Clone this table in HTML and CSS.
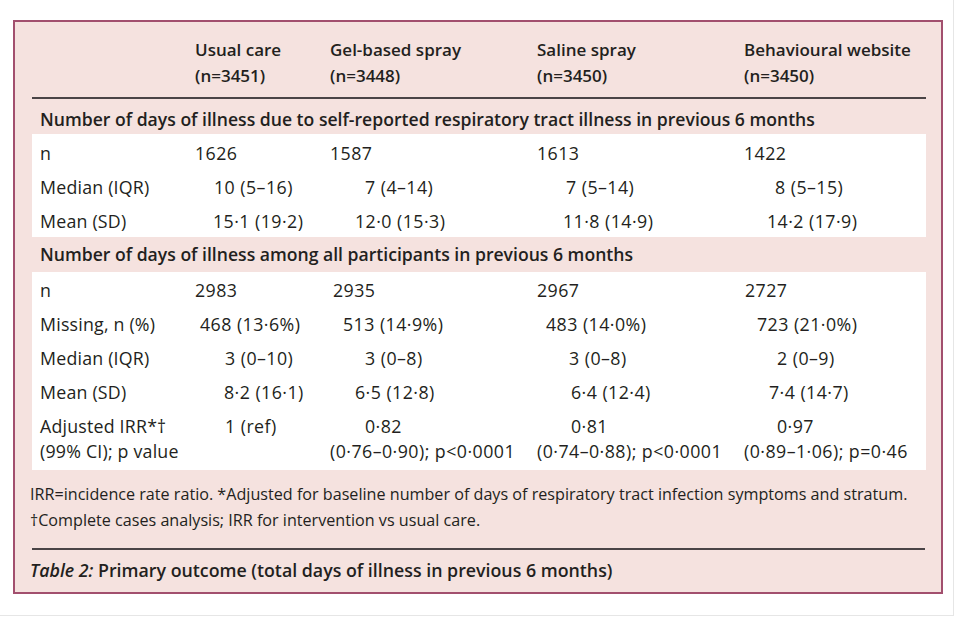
FILE: index.html
```html
<!DOCTYPE html>
<html lang="en">
<head>
<meta charset="utf-8">
<title>Table 2</title>
<link rel="stylesheet" href="styles.css">
</head>
<body>
<div class="frame">
  <div class="box">
    <div class="grid head">
      <div></div>
      <div>Usual care<br>(n=3451)</div>
      <div>Gel-based spray<br>(n=3448)</div>
      <div>Saline spray<br>(n=3450)</div>
      <div>Behavioural website<br>(n=3450)</div>
    </div>
    <div class="rule"></div>
    <div class="section">Number of days of illness due to self-reported respiratory tract illness in previous 6 months</div>
    <div class="block">
      <div class="grid row">
        <div class="lab">n</div>
        <div>1626</div>
        <div>1587</div>
        <div>1613</div>
        <div>1422</div>
      </div>
      <div class="grid row">
        <div class="lab">Median (IQR)</div>
        <div class="x19">10 (5–16)</div>
        <div class="x35">7 (4–14)</div>
        <div class="x29">7 (5–14)</div>
        <div class="x31">8 (5–15)</div>
      </div>
      <div class="grid row">
        <div class="lab">Mean (SD)</div>
        <div class="x18">15·1 (19·2)</div>
        <div class="x25">12·0 (15·3)</div>
        <div class="x26">11·8 (14·9)</div>
        <div class="x23">14·2 (17·9)</div>
      </div>
    </div>
    <div class="section s2">Number of days of illness among all participants in previous 6 months</div>
    <div class="block b2">
      <div class="grid row">
        <div class="lab">n</div>
        <div>2983</div>
        <div class="x3">2935</div>
        <div>2967</div>
        <div class="x1">2727</div>
      </div>
      <div class="grid row">
        <div class="lab">Missing, n (%)</div>
        <div class="x5">468 (13·6%)</div>
        <div class="x13">513 (14·9%)</div>
        <div class="x9">483 (14·0%)</div>
        <div class="x13">723 (21·0%)</div>
      </div>
      <div class="grid row">
        <div class="lab">Median (IQR)</div>
        <div class="x30">3 (0–10)</div>
        <div class="x35">3 (0–8)</div>
        <div class="x32">3 (0–8)</div>
        <div class="x33">2 (0–9)</div>
      </div>
      <div class="grid row">
        <div class="lab">Mean (SD)</div>
        <div class="x29">8·2 (16·1)</div>
        <div class="x25">6·5 (12·8)</div>
        <div class="x34">6·4 (12·4)</div>
        <div class="x25">7·4 (14·7)</div>
      </div>
      <div class="grid row two">
        <div class="lab">Adjusted IRR*†<br>(99% CI); p value</div>
        <div><span class="x30">1 (ref)</span></div>
        <div><span class="x35">0·82</span><br>(0·76–0·90); p&lt;0·0001</div>
        <div><span class="x34">0·81</span><br>(0·74–0·88); p&lt;0·0001</div>
        <div><span class="x33">0·97</span><br>(0·89–1·06); p=0·46</div>
      </div>
    </div>
    <div class="notes">IRR=incidence rate ratio. *Adjusted for baseline number of days of respiratory tract infection symptoms and stratum.<br>†Complete cases analysis; IRR for intervention vs usual care.</div>
    <div class="rule r2"></div>
    <div class="caption"><i>Table 2:</i> Primary outcome (total days of illness in previous 6 months)</div>
  </div>
</div>
</body>
</html>
```

FILE: styles.css
```css
* { box-sizing: border-box; }
html, body { margin: 0; padding: 0; background: #ffffff; }
body {
  font-family: "Open Sans", "Noto Sans", sans-serif;
  color: #231f20;
  width: 960px;
  height: 617px;
  overflow: hidden;
}
.frame {
  width: 954px;
  height: 616px;
  border-right: 1px solid #e6e6e6;
  border-bottom: 1px solid #e6e6e6;
  padding: 20px 0 0 13px;
}
.box {
  width: 930px;
  height: 574px;
  background: #f5e2df;
  border: 2px solid #a24f6e;
  padding: 0 15px 0 17px;
}
.grid {
  display: grid;
  grid-template-columns: 155px 135px 207px 207px 1fr;
  padding-left: 8px;
}
.head {
  font-weight: 600;
  font-size: 17px;
  line-height: 26px;
  padding-top: 15px;
  height: 75px;
}
.rule {
  height: 1.5px;
  background: #4a4446;
}
.section {
  font-weight: 600;
  font-size: 17.6px;
  line-height: 40px;
  padding-left: 8px;
  height: 35.5px;
}
.s2 { line-height: 35px; height: 35px; }
.block {
  background: #ffffff;
  padding-top: 2px;
  height: 103px;
}
.b2 { padding-top: 1px; height: 198px; }
.row {
  font-size: 17.8px;
  line-height: 34px;
  height: 34px;
  letter-spacing: 0.2px;
}
.row > div:not(.lab) { letter-spacing: 0.45px; }
.row.two {
  line-height: 25px;
  height: 63px;
  padding-top: 5px;
}
.notes {
  font-size: 16.15px;
  line-height: 26px;
  padding-top: 11px;
  height: 78px;
  margin-left: -2px;
}
.r2 { margin: 0 1px 0 0; }
.caption {
  font-weight: 600;
  font-size: 17.8px;
  line-height: 40px;
  margin-left: -2px;
}
.x1 { padding-left: 1px; }
.x3 { padding-left: 3px; }
.x5 { padding-left: 5px; }
.x9 { padding-left: 9px; }
.x13 { padding-left: 13px; }
.x18 { padding-left: 18px; }
.x19 { padding-left: 19px; }
.x23 { padding-left: 23px; }
.x25 { padding-left: 25px; }
.x26 { padding-left: 26px; }
.x29 { padding-left: 29px; }
.x30 { padding-left: 30px; }
.x31 { padding-left: 31px; }
.x32 { padding-left: 32px; }
.x33 { padding-left: 33px; }
.x34 { padding-left: 34px; }
.x35 { padding-left: 35px; }
span.x30, span.x33, span.x34, span.x35 { display: inline-block; }
```
